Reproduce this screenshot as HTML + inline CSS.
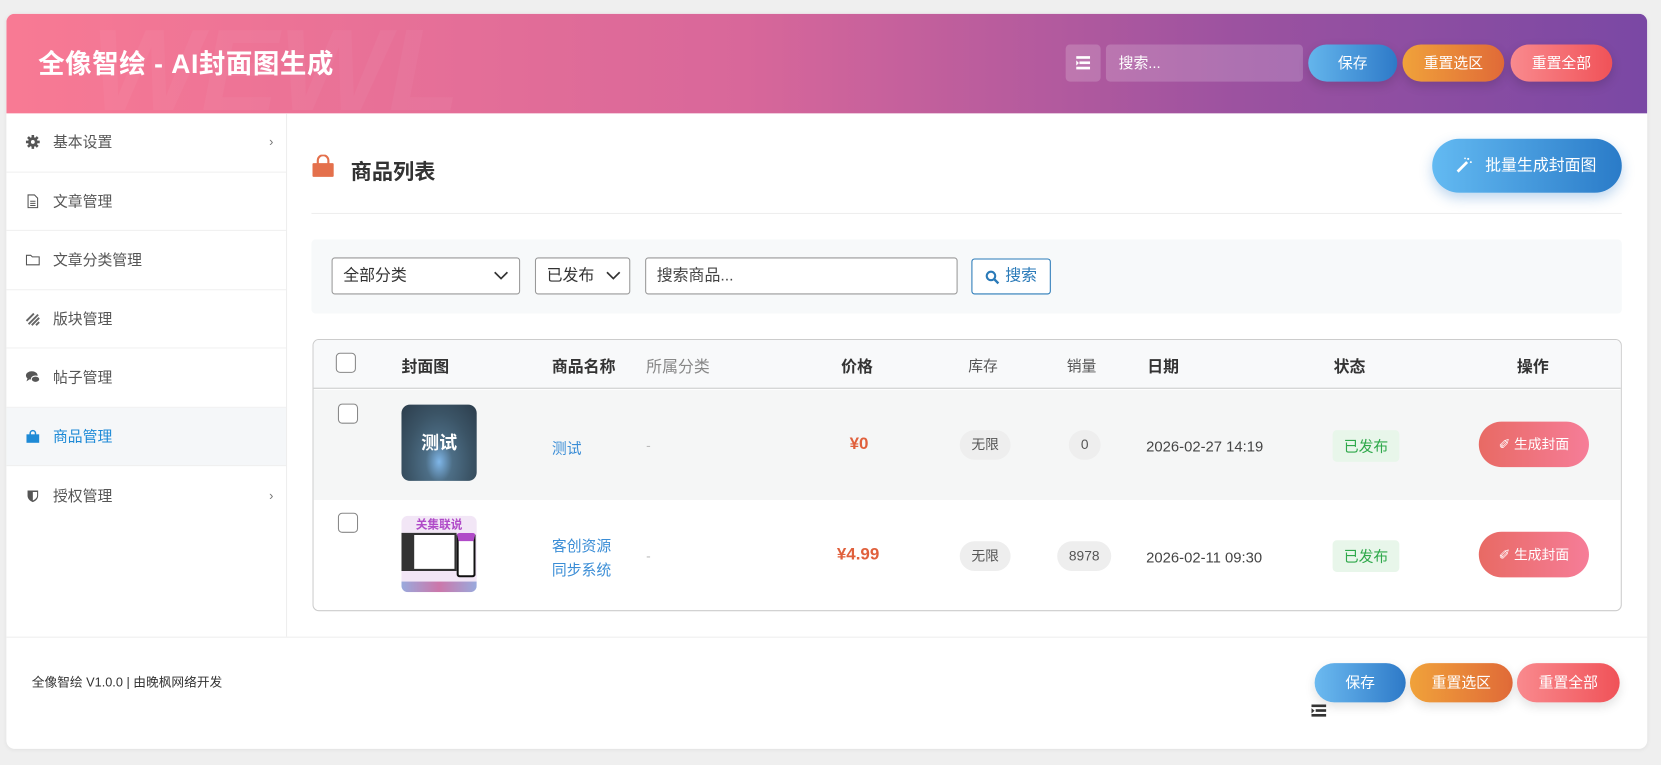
<!DOCTYPE html>
<html><head><meta charset="utf-8">
<style>
*{box-sizing:border-box;margin:0;padding:0}
html,body{width:1661px;height:765px;overflow:hidden}
body{background:#efefef;font-family:"Liberation Sans","Noto Sans CJK SC",sans-serif;color:#333}
.wrap{position:absolute;left:0;top:0;width:1568px;height:722px;transform:scale(1.05931);transform-origin:0 0}
.card{position:absolute;left:6px;top:13px;width:1549px;height:694px;background:#fff;border-radius:8px;overflow:hidden;box-shadow:0 1px 4px rgba(0,0,0,.06)}
.hdr{position:absolute;left:0;top:0;width:1549px;height:94px;background:linear-gradient(90deg,#f87a94 0%,#d8679a 45%,#9c52a0 75%,#7a48a4 100%)}
.hdr h1{position:absolute;left:30px;top:28px;font-size:25px;color:#fff;font-weight:bold;letter-spacing:.5px}
.hbtn{position:absolute;top:29px;height:35px;border-radius:18px;color:#fff;font-size:14px;text-align:center;line-height:35px;box-shadow:0 4px 10px rgba(0,0,0,.15)}
.side{position:absolute;left:0;top:94px;width:265px;height:494px;border-right:1px solid #eee}
.si{height:55.5px;border-bottom:1px solid #f0f0f0;display:flex;align-items:center;padding-left:18px;font-size:14px;color:#555;position:relative}
.si .ic{width:14px;height:14px;margin-right:12px;display:inline-block}
.si.act{background:#f5f7f9;color:#1e8ad6}
.si .ar{position:absolute;right:12px;font-size:12px;color:#777}
.abs{position:absolute}
.tbl{position:absolute;left:289px;top:307px;width:1236px;height:257px;border:1px solid #ccc;border-radius:6px;overflow:hidden}
.th{position:absolute;font-size:15px;font-weight:bold;color:#333}
.cb{position:absolute;width:19px;height:19px;border:1px solid #888;border-radius:4px;background:#fff}
.pill{position:absolute;height:28px;border-radius:14px;background:#eee;color:#555;font-size:13px;text-align:center;line-height:28px}
.gen{position:absolute;width:104px;height:43px;border-radius:22px;background:linear-gradient(90deg,#e86a64,#f67d98);color:#fff;font-size:13px;text-align:center;line-height:43px}
.st{position:absolute;width:63px;height:30px;background:#e8f6ea;color:#2ea84a;font-size:14px;text-align:center;line-height:30px;border-radius:4px}
.fb{position:absolute;top:613px;height:37px;border-radius:19px;color:#fff;font-size:14px;text-align:center;line-height:37px;box-shadow:0 4px 10px rgba(0,0,0,.12)}
</style></head><body>
<div class="wrap">
<div class="card">
 <div class="hdr">
  <div style="position:absolute;left:80px;top:-10px;font-size:110px;font-weight:bold;font-style:italic;color:rgba(255,255,255,.04)">WEWL</div>
  <h1>全像智绘 - AI封面图生成</h1>
  <div style="position:absolute;left:1000px;top:29px;width:33px;height:35px;background:rgba(255,255,255,.18);border-radius:4px"><svg width="33" height="35"><g fill="#fff"><rect x="10" y="11" width="13" height="2.5"/><rect x="13" y="16" width="10" height="2.5"/><rect x="10" y="21" width="13" height="2.5"/><path d="M10 15v5l2.5-2.5z"/></g></svg></div>
  <div style="position:absolute;left:1038px;top:29px;width:186px;height:35px;background:rgba(255,255,255,.18);border-radius:4px;color:#fff;font-size:14px;line-height:35px;padding-left:12px">搜索...</div>
  <div class="hbtn" style="left:1229px;width:84px;background:linear-gradient(90deg,#64b5ec,#2e7ac8)">保存</div>
  <div class="hbtn" style="left:1318px;width:96px;background:linear-gradient(90deg,#f0a23a,#e06a38)">重置选区</div>
  <div class="hbtn" style="left:1420px;width:96px;background:linear-gradient(90deg,#f98a8e,#f05258)">重置全部</div>
 </div>
 <div class="side">
  <div class="si"><svg class="ic" viewBox="0 0 14 14"><circle cx="7" cy="7" r="4.5" fill="#555"/><g stroke="#555" stroke-width="2.4"><path d="M7 0.5v13M0.5 7h13M2.4 2.4l9.2 9.2M11.6 2.4l-9.2 9.2"/></g><circle cx="7" cy="7" r="1.8" fill="#fff"/></svg>基本设置<span class="ar">›</span></div>
  <div class="si"><svg class="ic" viewBox="0 0 14 14"><path d="M2.5 1h6l3 3v9h-9z" fill="none" stroke="#555"/><path d="M4.5 7h5M4.5 9h5M4.5 11h5" stroke="#555"/></svg>文章管理</div>
  <div class="si"><svg class="ic" viewBox="0 0 14 14"><path d="M1 3h4l1.5 1.5H13v7.5H1z" fill="none" stroke="#555"/></svg>文章分类管理</div>
  <div class="si"><svg class="ic" viewBox="0 0 14 14"><g stroke="#666" stroke-width="1.8" fill="none"><path d="M1 9l7-7M3 12l9-9M6 13l7-7M10 13l3-3"/></g></svg>版块管理</div>
  <div class="si"><svg class="ic" viewBox="0 0 14 14"><ellipse cx="6" cy="5.5" rx="5.5" ry="4" fill="#555"/><path d="M2 8l-1 3 3-2z" fill="#555"/><ellipse cx="9.5" cy="9" rx="4" ry="3" fill="#555" stroke="#fff"/></svg>帖子管理</div>
  <div class="si act"><svg class="ic" viewBox="0 0 14 14"><rect x="1" y="5" width="12" height="8" fill="#1e8ad6"/><path d="M4.5 6V4a2.5 2.5 0 0 1 5 0v2" fill="none" stroke="#1e8ad6" stroke-width="1.4"/></svg>商品管理</div>
  <div class="si" style="border:none"><svg class="ic" viewBox="0 0 14 14"><path d="M2 2h10v5c0 3-2.5 5-5 6-2.5-1-5-3-5-6z" fill="#555"/><path d="M7 3.5h4v3.5c0 2-2 3.5-4 4.5z" fill="#fff"/></svg>授权管理<span class="ar">›</span></div>
 </div>
 <svg class="abs" style="left:288px;top:133px" width="22" height="22" viewBox="0 0 22 22"><rect x="1" y="8" width="20" height="13" rx="1" fill="#e4704c"/><path d="M6 9V5.5a5 5 0 0 1 10 0V9" fill="none" stroke="#e4704c" stroke-width="2"/></svg>
 <div class="abs" style="left:325px;top:133px;font-size:20px;font-weight:bold;color:#333">商品列表</div>
 <div class="abs" style="left:1346px;top:118px;width:179px;height:51px;border-radius:26px;background:linear-gradient(90deg,#63baf2,#2a7bc8);color:#fff;font-size:15px;line-height:51px;box-shadow:0 5px 12px rgba(40,120,200,.3);padding-left:50px">批量生成封面图
  <svg style="position:absolute;left:22px;top:17px" width="16" height="16" viewBox="0 0 16 16"><path d="M2 14L11 5" stroke="#fff" stroke-width="2.6"/><g fill="#fff"><circle cx="12" cy="2" r="1"/><circle cx="14.5" cy="5" r=".9"/><circle cx="9" cy="1.5" r=".8"/></g></svg></div>
 <div class="abs" style="left:288px;top:188px;width:1237px;height:1px;background:#eee"></div>
 <div class="abs" style="left:288px;top:213px;width:1237px;height:70px;background:#f7f9fa;border-radius:4px"></div>
 <div class="abs" style="left:307px;top:230px;width:178px;height:35px;border:1px solid #999;border-radius:3px;background:#fff;font-size:15px;line-height:33px;padding-left:10px">全部分类<svg style="position:absolute;right:10px;top:12px" width="14" height="9"><path d="M1 1l6 6 6-6" stroke="#333" stroke-width="1.6" fill="none"/></svg></div>
 <div class="abs" style="left:499px;top:230px;width:90px;height:35px;border:1px solid #999;border-radius:3px;background:#fff;font-size:15px;line-height:33px;padding-left:10px">已发布<svg style="position:absolute;right:8px;top:12px" width="14" height="9"><path d="M1 1l6 6 6-6" stroke="#333" stroke-width="1.6" fill="none"/></svg></div>
 <div class="abs" style="left:603px;top:230px;width:295px;height:35px;border:1px solid #999;border-radius:3px;background:#fff;font-size:15px;line-height:33px;padding-left:10px;color:#444">搜索商品...</div>
 <div class="abs" style="left:911px;top:231px;width:75px;height:34px;border:1px solid #2a7ab8;border-radius:3px;background:#fff;color:#2a7ab8;font-size:15px;line-height:32px;padding-left:31px">搜索<svg style="position:absolute;left:12px;top:10px" width="14" height="14"><circle cx="5.5" cy="5.5" r="4" stroke="#2a7ab8" stroke-width="2" fill="none"/><path d="M8.5 8.5l4 4" stroke="#2a7ab8" stroke-width="2.2"/></svg></div>

 <div class="tbl">
  <div class="abs" style="left:0;top:0;width:1236px;height:46px;background:#f8f9fa;border-bottom:1px solid #ccc"></div>
  <div class="abs" style="left:0;top:47px;width:1236px;height:104px;background:#f5f6f6"></div>
  <div class="cb" style="left:21px;top:12px"></div>
  <div class="th" style="left:83px;top:14px">封面图</div>
  <div class="th" style="left:225px;top:14px">商品名称</div>
  <div class="th" style="left:314px;top:14px;color:#888;font-weight:normal">所属分类</div>
  <div class="th" style="left:498px;top:14px">价格</div>
  <div class="th" style="left:618px;top:14px;font-weight:normal;color:#555;font-size:14px">库存</div>
  <div class="th" style="left:711px;top:14px;font-weight:normal;color:#555;font-size:14px">销量</div>
  <div class="th" style="left:787px;top:14px">日期</div>
  <div class="th" style="left:963px;top:14px">状态</div>
  <div class="th" style="left:1136px;top:14px">操作</div>
  <div class="cb" style="left:23px;top:60px"></div>
  <div class="abs" style="left:83px;top:61px;width:71px;height:72px;border-radius:8px;background:radial-gradient(ellipse at 50% 75%,#7fb6e8 0,#4d6e86 25%,#3b5466 60%,#2c3d4c 100%);color:#fff;font-weight:bold;font-size:17px;text-align:center;padding-top:22px">测试</div>
  <div class="abs" style="left:225px;top:92px;color:#3a8dd6;font-size:14px">测试</div>
  <div class="abs" style="left:314px;top:92px;color:#bbb;font-size:13px">-</div>
  <div class="abs" style="left:506px;top:90px;color:#e0603c;font-size:16px;font-weight:bold">¥0</div>
  <div class="pill" style="left:610px;top:85px;width:48px">无限</div>
  <div class="pill" style="left:713px;top:85px;width:30px">0</div>
  <div class="abs" style="left:786px;top:92px;font-size:14px;color:#444">2026-02-27 14:19</div>
  <div class="st" style="left:962px;top:85px">已发布</div>
  <div class="gen" style="left:1100px;top:77px">✐ 生成封面</div>
  <div class="cb" style="left:23px;top:163px"></div>
  <div class="abs" style="left:83px;top:166px;width:71px;height:72px;border-radius:6px;background:#f2e6f6;overflow:hidden">
   <div style="height:14px;color:#b04ac8;font-size:11px;font-weight:bold;text-align:center">关集联说</div>
   <div style="position:absolute;left:0;top:16px;width:52px;height:36px;background:#fff;border:2px solid #333;border-left:12px solid #333"></div>
   <div style="position:absolute;left:52px;top:16px;width:18px;height:42px;background:#fff;border:2px solid #111;border-top:8px solid #b04ac8;border-radius:3px"></div>
   <div style="position:absolute;left:0;top:62px;width:71px;height:10px;background:linear-gradient(90deg,#9ad,#c7a,#9ad)"></div>
  </div>
  <div class="abs" style="left:225px;top:183px;color:#3a8dd6;font-size:14px;line-height:23px">客创资源<br>同步系统</div>
  <div class="abs" style="left:314px;top:196px;color:#bbb;font-size:13px">-</div>
  <div class="abs" style="left:494px;top:194px;color:#e0603c;font-size:16px;font-weight:bold">¥4.99</div>
  <div class="pill" style="left:610px;top:190px;width:48px">无限</div>
  <div class="pill" style="left:702px;top:190px;width:51px">8978</div>
  <div class="abs" style="left:786px;top:197px;font-size:14px;color:#444">2026-02-11 09:30</div>
  <div class="st" style="left:962px;top:189px">已发布</div>
  <div class="gen" style="left:1100px;top:181px">✐ 生成封面</div>
 </div>
 <div class="abs" style="left:0;top:588px;width:1549px;height:1px;background:#eee"></div>
 <div class="abs" style="left:24px;top:622px;font-size:12px;color:#333">全像智绘 V1.0.0 | 由晚枫网络开发</div>
 <div class="fb" style="left:1235px;width:86px;background:linear-gradient(90deg,#6cbaf0,#2e7ac8)">保存</div>
 <div class="fb" style="left:1325px;width:97px;background:linear-gradient(90deg,#f0a23a,#e06a38)">重置选区</div>
 <div class="fb" style="left:1426px;width:97px;background:linear-gradient(90deg,#f98a8e,#f05258)">重置全部</div>
 <svg class="abs" style="left:1232px;top:652px" width="14" height="12"><g fill="#333"><rect x="0" y="0" width="14" height="2.5"/><rect x="4" y="4.5" width="10" height="2.5"/><rect x="0" y="9" width="14" height="2.5"/><path d="M0 3.5v5l3-2.5z"/></g></svg>
</div>
</div>
</body></html>
